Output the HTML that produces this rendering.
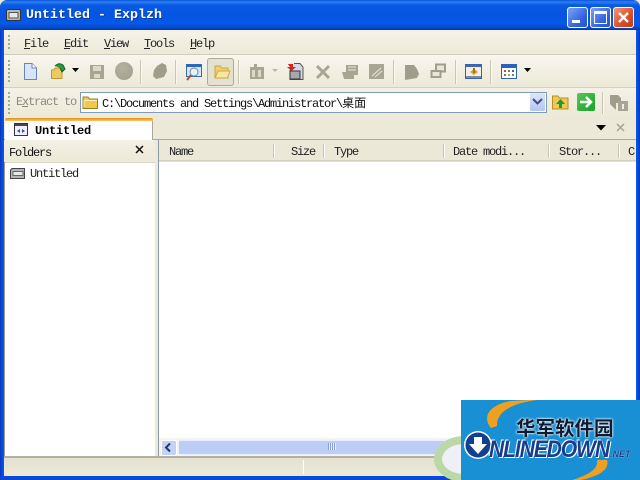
<!DOCTYPE html>
<html><head><meta charset="utf-8"><style>
html,body{margin:0;padding:0;background:#0a50dc}
#w{position:relative;width:640px;height:480px;overflow:hidden;background:#ece9d8;font-family:"Liberation Mono","Noto Sans CJK SC",monospace;font-size:12px;letter-spacing:-1.2px;color:#222}
#w div,#w svg,#w span{position:absolute;white-space:pre}
.sep{width:1px;background:#c9c6b4;border-right:1px solid #f8f7f0}
.grip{width:2px;background:repeating-linear-gradient(#a8a595 0 2px,transparent 2px 4px)}
.hsep{width:1px;height:14px;background:#c8c5b3;border-right:1px solid #fff}
</style></head><body><div id="w">
<!-- title bar -->
<div style="left:0;top:0;width:640px;height:30px;background:linear-gradient(#0a52d8 0,#2c80f2 2px,#0a5ae4 5px,#0655e2 14px,#0558e8 24px,#0449c8 28px,#03389f 30px);border-radius:7px 7px 0 0"></div>
<svg style="left:6px;top:8px" width="16" height="16"><rect x=".5" y="1.5" width="14" height="11" rx="1.5" fill="#b9b9b4" stroke="#333"/><rect x="3" y="4.5" width="9" height="5.5" fill="#e8e8e4" stroke="#555"/></svg>
<div style="left:26px;top:8px;color:#fff;font-weight:bold;font-size:13.33px;letter-spacing:0;text-shadow:1px 1px 0 #0a3a9a">Untitled - Explzh</div>
<div style="left:567px;top:7px;width:19px;height:19px;border:1px solid #fff;border-radius:3px;background:linear-gradient(135deg,#7ea2f0,#2c5fe0 70%,#2a55c8)"></div>
<div style="left:572px;top:20px;width:8px;height:3px;background:#fff"></div>
<div style="left:590px;top:7px;width:19px;height:19px;border:1px solid #fff;border-radius:3px;background:linear-gradient(135deg,#7ea2f0,#2c5fe0 70%,#2a55c8)"></div>
<div style="left:594px;top:11px;width:11px;height:9px;border:1px solid #fff;border-top:3px solid #fff"></div>
<div style="left:613px;top:7px;width:19px;height:19px;border:1px solid #fff;border-radius:3px;background:linear-gradient(135deg,#ec9a7c,#dc4e28 60%,#c03a18)"></div>
<svg style="left:613px;top:7px" width="21" height="21"><path d="M6 6L15 15M15 6L6 15" stroke="#fff" stroke-width="2.4"/></svg>
<!-- window borders -->
<div style="left:0;top:30px;width:4px;height:450px;background:linear-gradient(90deg,#0838c0,#0a5af0)"></div>
<div style="left:636px;top:30px;width:4px;height:450px;background:linear-gradient(90deg,#0a5af0,#0838c0)"></div>
<div style="left:0;top:476px;width:640px;height:4px;background:#0a48d8"></div>
<!-- menu -->
<div style="left:4px;top:30px;width:632px;height:24px;background:linear-gradient(#f6f4ea,#ece9d8)"></div>
<div class="grip" style="left:8px;top:35px;height:16px"></div>
<div style="left:24px;top:37px"><u>F</u>ile</div>
<div style="left:64px;top:37px"><u>E</u>dit</div>
<div style="left:104px;top:37px"><u>V</u>iew</div>
<div style="left:144px;top:37px"><u>T</u>ools</div>
<div style="left:190px;top:37px"><u>H</u>elp</div>
<div style="left:4px;top:54px;width:632px;height:1px;background:#cfccba"></div>
<!-- toolbar -->
<div style="left:4px;top:55px;width:632px;height:32px;background:linear-gradient(#f8f6ee,#ece9d8)"></div>
<div class="grip" style="left:8px;top:60px;height:24px"></div>
<svg style="left:22px;top:62px" width="17" height="19"><path d="M2.5 1.5H10L14.5 6V17.5H2.5Z" fill="#d6e6f8" stroke="#6a86b8"/><path d="M10 1.5V6H14.5" fill="#fff" stroke="#6a86b8"/></svg>
<svg style="left:50px;top:62px" width="18" height="19"><path d="M1.5 8H4L5 6H12V16.5H1.5Z" fill="#f0c860" stroke="#c09838"/><path d="M5 4Q9 0 13 3L15 7L12 10L10 6" fill="#2c9a3c" stroke="#14602a"/></svg>
<svg style="left:72px;top:68px" width="7" height="5"><path d="M0 0H7L3.5 4Z" fill="#000"/></svg>
<svg style="left:89px;top:64px" width="16" height="16"><path d="M1 1H15V15H1Z" fill="#a8a595"/><path d="M4 2H12V7H4ZM5 10H11V14H5Z" fill="#dcd9c8"/></svg>
<div style="left:115px;top:62px;width:18px;height:18px;border-radius:50%;background:radial-gradient(circle at 40% 35%,#b4b1a0,#a09d8c)"></div>
<div class="sep" style="left:140px;top:60px;height:24px"></div>
<svg style="left:151px;top:62px" width="17" height="18"><path d="M6 4L11 1L15 3L16 9L13 15L5 17L2 14L3 8Z" fill="#a09d8c"/></svg>
<div class="sep" style="left:175px;top:60px;height:24px"></div>
<svg style="left:185px;top:63px" width="18" height="20"><rect x="1.5" y="1.5" width="15" height="12" fill="#d8e8f8" stroke="#3a68a8"/><rect x="1" y="1" width="16" height="3" fill="#2a68b8"/><circle cx="9" cy="9" r="4" fill="#e8f0f8" stroke="#6a8aa0"/><path d="M6 12L2 17" stroke="#a85030" stroke-width="2"/></svg>
<div style="left:207px;top:58px;width:25px;height:26px;border:1px solid #aeaa98;border-radius:3px;background:#e4e1d2"></div>
<svg style="left:214px;top:64px" width="18" height="16"><path d="M1 2H6L7.5 4H14V14H1Z" fill="#f0d070" stroke="#d0a838"/><path d="M1 14L4 7H16L13.5 14Z" fill="#fae8a0" stroke="#d0a838"/></svg>
<div class="sep" style="left:238px;top:60px;height:24px"></div>
<svg style="left:248px;top:62px" width="18" height="18"><path d="M2 5H6V2H9V5H16V17H2Z" fill="#a8a595"/><path d="M4 8H7V15H4ZM10 8H13V15H10Z" fill="#dcd9c8"/></svg>
<svg style="left:272px;top:69px" width="6" height="4"><path d="M0 0H6L3 3Z" fill="#bbb8a8"/></svg>
<svg style="left:286px;top:62px" width="18" height="19"><path d="M8 1.5H14L17 5V17.5H4V8" fill="#d8d8e8" stroke="#555"/><rect x="4" y="9" width="10" height="8" fill="#a8a8b0" stroke="#333"/><path d="M2 2L7 2L7 5L10 5L5.5 9L1 5L4 5" fill="#e02020"/></svg>
<svg style="left:315px;top:64px" width="16" height="16"><path d="M2 2L14 14M14 2L2 14" stroke="#a8a595" stroke-width="3"/></svg>
<svg style="left:341px;top:64px" width="18" height="17"><path d="M5 1H17V11H13V15H3L1 8H5Z" fill="#a8a595"/><path d="M7 3H15M7 6H15" stroke="#e8e6d8"/></svg>
<svg style="left:369px;top:64px" width="16" height="16"><rect width="15" height="15" fill="#a8a595"/><path d="M3 12L12 4M6 13L13 7" stroke="#e8e6d8"/></svg>
<div class="sep" style="left:393px;top:60px;height:24px"></div>
<svg style="left:404px;top:64px" width="16" height="17"><path d="M1 1H10L13 5L15 10L13 14L1 16Z" fill="#a09d8c"/></svg>
<svg style="left:430px;top:63px" width="17" height="18"><rect x="6" y="1.5" width="9" height="7" fill="#e8e6d8" stroke="#a09d8c" stroke-width="2"/><rect x="1.5" y="8" width="9" height="6" fill="#e8e6d8" stroke="#a09d8c" stroke-width="2"/></svg>
<div class="sep" style="left:455px;top:60px;height:24px"></div>
<svg style="left:465px;top:64px" width="18" height="16"><rect x=".5" y=".5" width="16" height="14" fill="#f0f0e8" stroke="#3a62a8"/><rect x="1" y="1" width="15" height="2" fill="#3a68b8"/><path d="M5 8L9 5L13 8L9 11Z" fill="#e0a020"/><path d="M8 4H10V9H8Z" fill="#b06818"/><rect x="1" y="12" width="15" height="2" fill="#7a8aa8"/></svg>
<div class="sep" style="left:490px;top:60px;height:24px"></div>
<svg style="left:501px;top:64px" width="17" height="16"><rect x=".5" y=".5" width="15" height="14" fill="#fff" stroke="#2a62b8"/><rect x="1" y="1" width="14" height="3" fill="#2a62c0"/><path d="M3 6h2v2H3z" fill="#e04040"/><path d="M7 6h2v2H7z" fill="#7a7a7a"/><path d="M11 6h2v2h-2z" fill="#4060c0"/><path d="M3 10h2v2H3z" fill="#40a040"/><path d="M7 10h2v2H7z" fill="#d0a020"/><path d="M11 10h2v2h-2z" fill="#7a7a7a"/></svg>
<svg style="left:524px;top:68px" width="7" height="5"><path d="M0 0H7L3.5 4Z" fill="#000"/></svg>
<div style="left:4px;top:87px;width:632px;height:1px;background:#d4d1c0"></div>
<!-- address -->
<div style="left:4px;top:88px;width:632px;height:29px;background:linear-gradient(#f4f2e6,#ece9d8)"></div>
<div class="grip" style="left:8px;top:92px;height:22px"></div>
<div style="left:16px;top:95px;color:#8c8a7c">E<u>x</u>tract to</div>
<div style="left:80px;top:92px;width:465px;height:19px;background:#fff;border:1px solid #7f9db9"></div>
<svg style="left:82px;top:94px" width="18" height="16"><path d="M1 3H6L7.5 5H15.500V14.500H1Z" fill="#f0c850" stroke="#a07c20"/><path d="M2 13V6.500H15" fill="none" stroke="#fff2b8"/></svg>
<div style="left:102px;top:96px;color:#111;line-height:14px">C:\Documents and Settings\Administrator\<span style="position:static;letter-spacing:0;font-size:12px;line-height:14px;font-family:'Noto Sans CJK SC',sans-serif">桌面</span></div>
<div style="left:530px;top:93px;width:15px;height:18px;background:linear-gradient(#dde6fb,#b4c6f0);border-radius:1px"></div>
<svg style="left:532px;top:98px" width="11" height="8"><path d="M1 1L5.500 5.500L10 1" fill="none" stroke="#3a5080" stroke-width="2"/></svg>
<svg style="left:551px;top:92px" width="19" height="19"><path d="M1.500 4H7L8.500 6H17V17H1.500Z" fill="#eec858" stroke="#b89020"/><path d="M9.500 7L14 12H11V16H8V12H5Z" fill="#18a030"/></svg>
<div style="left:577px;top:93px;width:18px;height:18px;background:linear-gradient(135deg,#58c858,#18a028);border-radius:2px"></div>
<svg style="left:577px;top:93px" width="18" height="18"><path d="M3 9H14M9 4L14 9L9 14" fill="none" stroke="#fff" stroke-width="2.500"/></svg>
<div class="sep" style="left:602px;top:92px;height:22px"></div>
<svg style="left:609px;top:93px" width="20" height="19"><path d="M1 2H9L12 5V10H7V17L1 11Z" fill="#a09d8c"/><rect x="9" y="8" width="10" height="10" fill="#a8a595"/><path d="M14 11V16" stroke="#eee" stroke-width="2"/></svg>
<!-- tabs -->
<div style="left:4px;top:117px;width:632px;height:22px;background:#ece9d8"></div>
<div style="left:4px;top:139px;width:632px;height:1px;background:#a8a99c"></div>
<div style="left:5px;top:119px;width:147px;height:21px;background:#fff;border-right:1px solid #a8a99c;border-radius:2px 2px 0 0"></div>
<div style="left:5px;top:118px;width:148px;height:3px;background:linear-gradient(#e88a14,#f8c868);border-radius:2px 2px 0 0"></div>
<svg style="left:14px;top:123px" width="15" height="14"><rect x=".5" y=".5" width="13" height="12" fill="#eef" stroke="#334"/><rect x="1" y="1" width="12" height="2" fill="#445"/><path d="M3 8L6 6V10ZM11 8L8 6V10Z" fill="#2a5aa8"/></svg>
<div style="left:35px;top:124px;font-weight:bold;color:#000;font-size:12px;letter-spacing:-.2px">Untitled</div>
<svg style="left:596px;top:125px" width="10" height="6"><path d="M0 0H10L5 5.500Z" fill="#000"/></svg>
<svg style="left:616px;top:123px" width="10" height="10"><path d="M1 1L8 8M8 1L1 8" stroke="#a8a598" stroke-width="1.500"/></svg>
<!-- left pane -->
<div style="left:4px;top:140px;width:152px;height:22px;background:linear-gradient(#f2f0e4,#ece9d8)"></div>
<div style="left:9px;top:146px;color:#111">Folders</div>
<svg style="left:135px;top:145px" width="10" height="9"><path d="M1 1L8 8M8 1L1 8" stroke="#111" stroke-width="1.500"/></svg>
<div style="left:5px;top:162px;width:151px;height:294px;background:#fff;border-top:1px solid #d8d5c4;box-sizing:border-box"></div>
<div style="left:4px;top:162px;width:1px;height:295px;background:#9a9a8c"></div>
<svg style="left:9px;top:167px" width="17" height="13"><path d="M3 1.500H15.500V11.500H1.500V3Z" fill="#b4b4b0" stroke="#444"/><rect x="4" y="4.500" width="10" height="4" fill="#e8e8e4" stroke="#666"/></svg>
<div style="left:30px;top:167px;color:#222">Untitled</div>
<!-- splitter -->
<div style="left:155px;top:140px;width:3px;height:317px;background:#ece9d8"></div>
<div style="left:158px;top:140px;width:1px;height:317px;background:#8a98a8"></div>
<!-- list -->
<div style="left:159px;top:140px;width:477px;height:316px;background:#fff"></div>
<div style="left:159px;top:140px;width:477px;height:20px;background:#ebe8d8;border-bottom:1px solid #d4d1c0;box-shadow:0 1px 0 #e2dfd0"></div>
<div style="left:169px;top:145px">Name</div><div class="hsep" style="left:273px;top:144px"></div>
<div style="left:291px;top:145px">Size</div><div class="hsep" style="left:323px;top:144px"></div>
<div style="left:334px;top:145px">Type</div><div class="hsep" style="left:443px;top:144px"></div>
<div style="left:453px;top:145px">Date modi...</div><div class="hsep" style="left:548px;top:144px"></div>
<div style="left:559px;top:145px">Stor...</div><div class="hsep" style="left:618px;top:144px"></div>
<div style="left:628px;top:145px">C</div>
<!-- hscroll -->
<div style="left:159px;top:438px;width:477px;height:18px;background:#f4f4f0"></div>
<div style="left:161px;top:440px;width:14px;height:14px;background:#c4d2f4;border:1px solid #fff;border-radius:2px"></div>
<svg style="left:163px;top:442px" width="11" height="11"><path d="M7 1.500L3 5.500L7 9.500" fill="none" stroke="#203a70" stroke-width="2"/></svg>
<div style="left:178px;top:440px;width:300px;height:13px;background:#bdcef6;border:1px solid #e8eefc;border-radius:2px"></div>
<div style="left:328px;top:443px;width:8px;height:7px;background:repeating-linear-gradient(90deg,#8aa0d8 0 1px,#e8eefc 1px 2px)"></div>
<!-- status -->
<div style="left:4px;top:456px;width:632px;height:2px;background:#b4b1a0"></div>
<div style="left:4px;top:458px;width:632px;height:18px;background:linear-gradient(#e4e1d0,#ece9d8)"></div>
<div style="left:303px;top:460px;width:1px;height:14px;background:#fff"></div>
<!-- watermark -->
<div style="left:434px;top:436px;width:60px;height:46px;border:8px solid #bcd8a8;border-radius:50%;box-sizing:border-box;background:#eef0f6"></div>
<div style="left:461px;top:400px;width:179px;height:80px;background:#1a90d4;overflow:hidden">
<svg style="left:0;top:0" width="179" height="80"><path d="M30 28C20 16 30 4 50 1L85 -1C60 1 35 8 36 26Z" fill="#f0a020"/><path d="M136 60L146 60C150 72 130 80 105 82C125 76 138 70 136 60Z" fill="#f0a020"/><ellipse cx="17" cy="45" rx="14" ry="14" fill="#fff"/><ellipse cx="17" cy="45" rx="12.500" ry="12.500" fill="#143e90"/><path d="M13 37H21V44H26L17 54L8 44H13Z" fill="#fff"/></svg>
<div style="left:55px;top:12px;font-family:'Noto Sans CJK SC',sans-serif;font-weight:bold;font-size:19.500px;letter-spacing:0;color:#101a30;text-shadow:0 0 2px #fff,0 0 2px #fff">华军软件园</div>
<div style="left:28px;top:36px;font-family:'Liberation Sans',sans-serif;font-weight:bold;font-style:italic;font-size:24px;letter-spacing:-1.300px;color:#143e90;text-shadow:0 0 1px #fff,1px 1px 0 #fff,-1px -1px 0 #fff;transform:scaleX(.88);transform-origin:left top">NLINEDOWN</div>
<div style="left:149px;top:49px;font-family:'Liberation Sans',sans-serif;font-weight:bold;font-style:italic;font-size:9px;letter-spacing:0;color:#143e90;text-shadow:0 0 1px #fff">.NET</div>
</div>
</div></body></html>
